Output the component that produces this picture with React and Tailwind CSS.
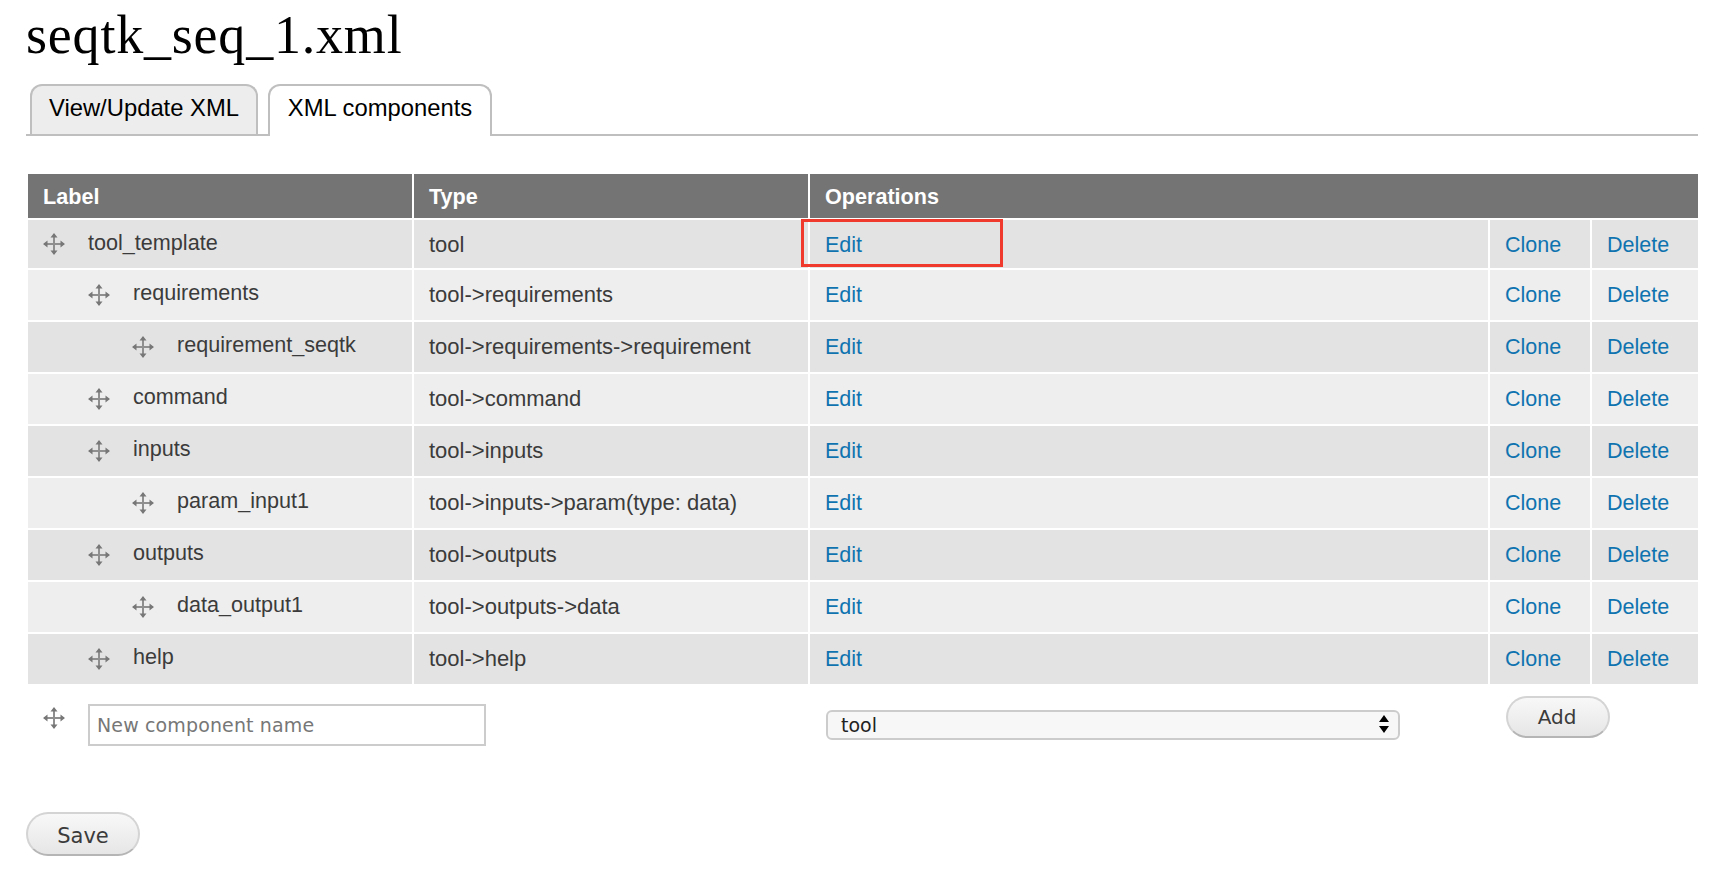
const rows = [
  { label: "tool_template", type: "tool", depth: 0 },
  { label: "requirements", type: "tool->requirements", depth: 1 },
  { label: "requirement_seqtk", type: "tool->requirements->requirement", depth: 2 },
  { label: "command", type: "tool->command", depth: 1 },
  { label: "inputs", type: "tool->inputs", depth: 1 },
  { label: "param_input1", type: "tool->inputs->param(type: data)", depth: 2 },
  { label: "outputs", type: "tool->outputs", depth: 1 },
  { label: "data_output1", type: "tool->outputs->data", depth: 2 },
  { label: "help", type: "tool->help", depth: 1 },
];

const indents = ["", "w-[45px]", "w-[89px]"];

const DragHandle = ({ className = "" }) => (
  <svg width="24" height="24" viewBox="0 0 24 24" className={`shrink-0 blur-[0.4px] ${className}`} fill="#777777">
    <rect x="2" y="11" width="20" height="2" fill="#8f8f8f" />
    <rect x="11" y="2" width="2" height="20" fill="#8f8f8f" />
    <path d="M12 1l3.5 4.5h-7zM12 23l-3.5-4.5h7zM1 12l4.5-3.5v7zM23 12l-4.5 3.5v-7z" />
  </svg>
);

const Link = ({ children }) => (
  <a href="#" className="text-[21.5px] text-[#0f73b0]">
    {children}
  </a>
);

const App = () => {
  return (
    <div className="min-h-[892px] bg-white pl-[26px] pr-[22px] font-['Liberation_Sans',sans-serif] text-[22px] text-[#3b3b3b]">
      <h1 className="pt-[2px] font-['Liberation_Serif',serif] text-[54px] leading-[66px] tracking-[0.8px] text-black">
        seqtk_seq_1.xml
      </h1>
      {/* Tabs */}
      <div className="mt-[16px] flex h-[52px] border-b-2 border-[#bfbfbf] pl-[4px]">
        <a className="h-[50px] w-[228px] rounded-t-[12px] border-2 border-b-0 border-[#bfbfbf] bg-[#ededed] pt-[6px] text-center text-[23.8px] leading-[32px] text-black">
          View/Update XML
        </a>
        <a className="ml-[10px] h-[52px] w-[224px] rounded-t-[12px] border-2 border-b-0 border-[#bfbfbf] bg-white pt-[6px] text-center text-[23.8px] leading-[32px] text-black">
          XML components
        </a>
      </div>

      <table className="mt-[38px] ml-[2px] w-[1670px] table-fixed border-separate border-spacing-0">
        <colgroup>
          <col className="w-[386px]" />
          <col className="w-[396px]" />
          <col className="w-[680px]" />
          <col className="w-[102px]" />
          <col className="w-[106px]" />
        </colgroup>
        <thead>
          <tr className="h-[46px] bg-[#747474] text-left text-[21.6px] font-bold text-white">
            <th className="border-r-2 border-b-2 border-white pt-[2px] pl-[15px]">Label</th>
            <th className="border-r-2 border-b-2 border-white pt-[2px] pl-[15px]">Type</th>
            <th colSpan={3} className="border-b-2 border-white pt-[2px] pl-[15px]">Operations</th>
          </tr>
        </thead>
        <tbody>
          {rows.map((row, index) => (
            <tr
              key={row.label}
              className={`${index === 0 ? "h-[50px]" : "h-[52px]"} ${index % 2 === 0 ? "bg-[#e3e3e3]" : "bg-[#eeeeee]"}`}
            >
              <td className="border-r-2 border-b-2 border-white pl-[14px]">
                <div className={`flex items-center ${index === 0 ? "pb-[2px]" : "pb-[4px]"}`}>
                  <div className={indents[row.depth]}></div>
                  <DragHandle className={index === 0 ? "mt-[2px]" : "mt-[4px]"} />
                  <span className="ml-[22px] text-[21.6px]">{row.label}</span>
                </div>
              </td>
              <td className={`border-r-2 border-b-2 border-white pl-[15px] ${index === 0 ? "" : "pb-[2px]"}`}>{row.type}</td>
              <td className={`border-r-2 border-b-2 border-white pl-[15px] ${index === 0 ? "pt-[2px]" : ""}`}><Link>Edit</Link></td>
              <td className={`border-r-2 border-b-2 border-white pl-[15px] ${index === 0 ? "pt-[2px]" : ""}`}><Link>Clone</Link></td>
              <td className={`border-b-2 border-white pl-[15px] ${index === 0 ? "pt-[2px]" : ""}`}><Link>Delete</Link></td>
            </tr>
          ))}
          <tr>
            <td className="overflow-visible pt-[18px] pl-[14px] align-top">
              <div className="flex items-start">
                <div className="pt-[2px]"><DragHandle /></div>
                <input
                  placeholder="New component name"
                  className="ml-[22px] h-[42px] w-[398px] shrink-0 border-2 border-[#cccccc] bg-white px-[7px] font-['DejaVu_Sans',sans-serif] text-[19px] tracking-[0.13px] outline-none placeholder:text-[#777777]"
                />
              </div>
            </td>
            <td></td>
            <td className="pt-[24px] pl-[16px] align-top">
              <div className="relative flex h-[30px] w-[574px] items-center rounded-[6px] border-2 border-[#cccccc] bg-[#f7f7f7] pl-[13px] font-['DejaVu_Sans',sans-serif] text-[19px] text-[#222222]">
                tool
                <svg width="12" height="20" viewBox="0 0 12 20" className="absolute right-[8px] top-[2px]">
                  <path d="M6 1l5 7H1zM6 19l-5-7h10z" fill="#000" />
                </svg>
              </div>
            </td>
            <td colSpan={2} className="pt-[10px] pl-[16px] align-top">
              <button className="h-[42px] w-[104px] rounded-[21px] border-2 border-[#d4d4d4] border-b-[#b5b5b5] bg-gradient-to-b from-[#f8f8f8] to-[#e6e6e6] pr-[2px] font-['DejaVu_Sans',sans-serif] text-[20px] text-[#3b3b3b]">
                Add
              </button>
            </td>
          </tr>
        </tbody>
      </table>

      <button className="mt-[66px] h-[44px] w-[114px] rounded-[22px] border-2 border-[#d4d4d4] border-b-[#b5b5b5] bg-gradient-to-b from-[#f8f8f8] to-[#e6e6e6] pt-[5px] font-['DejaVu_Sans',sans-serif] text-[21px] text-[#3b3b3b]">
        Save
      </button>

      {/* red annotation box from the screenshot */}
      <div className="absolute left-[801px] top-[219px] h-[48px] w-[202px] border-[3px] border-[#f03a2e]"></div>
    </div>
  );
};

export default App;
